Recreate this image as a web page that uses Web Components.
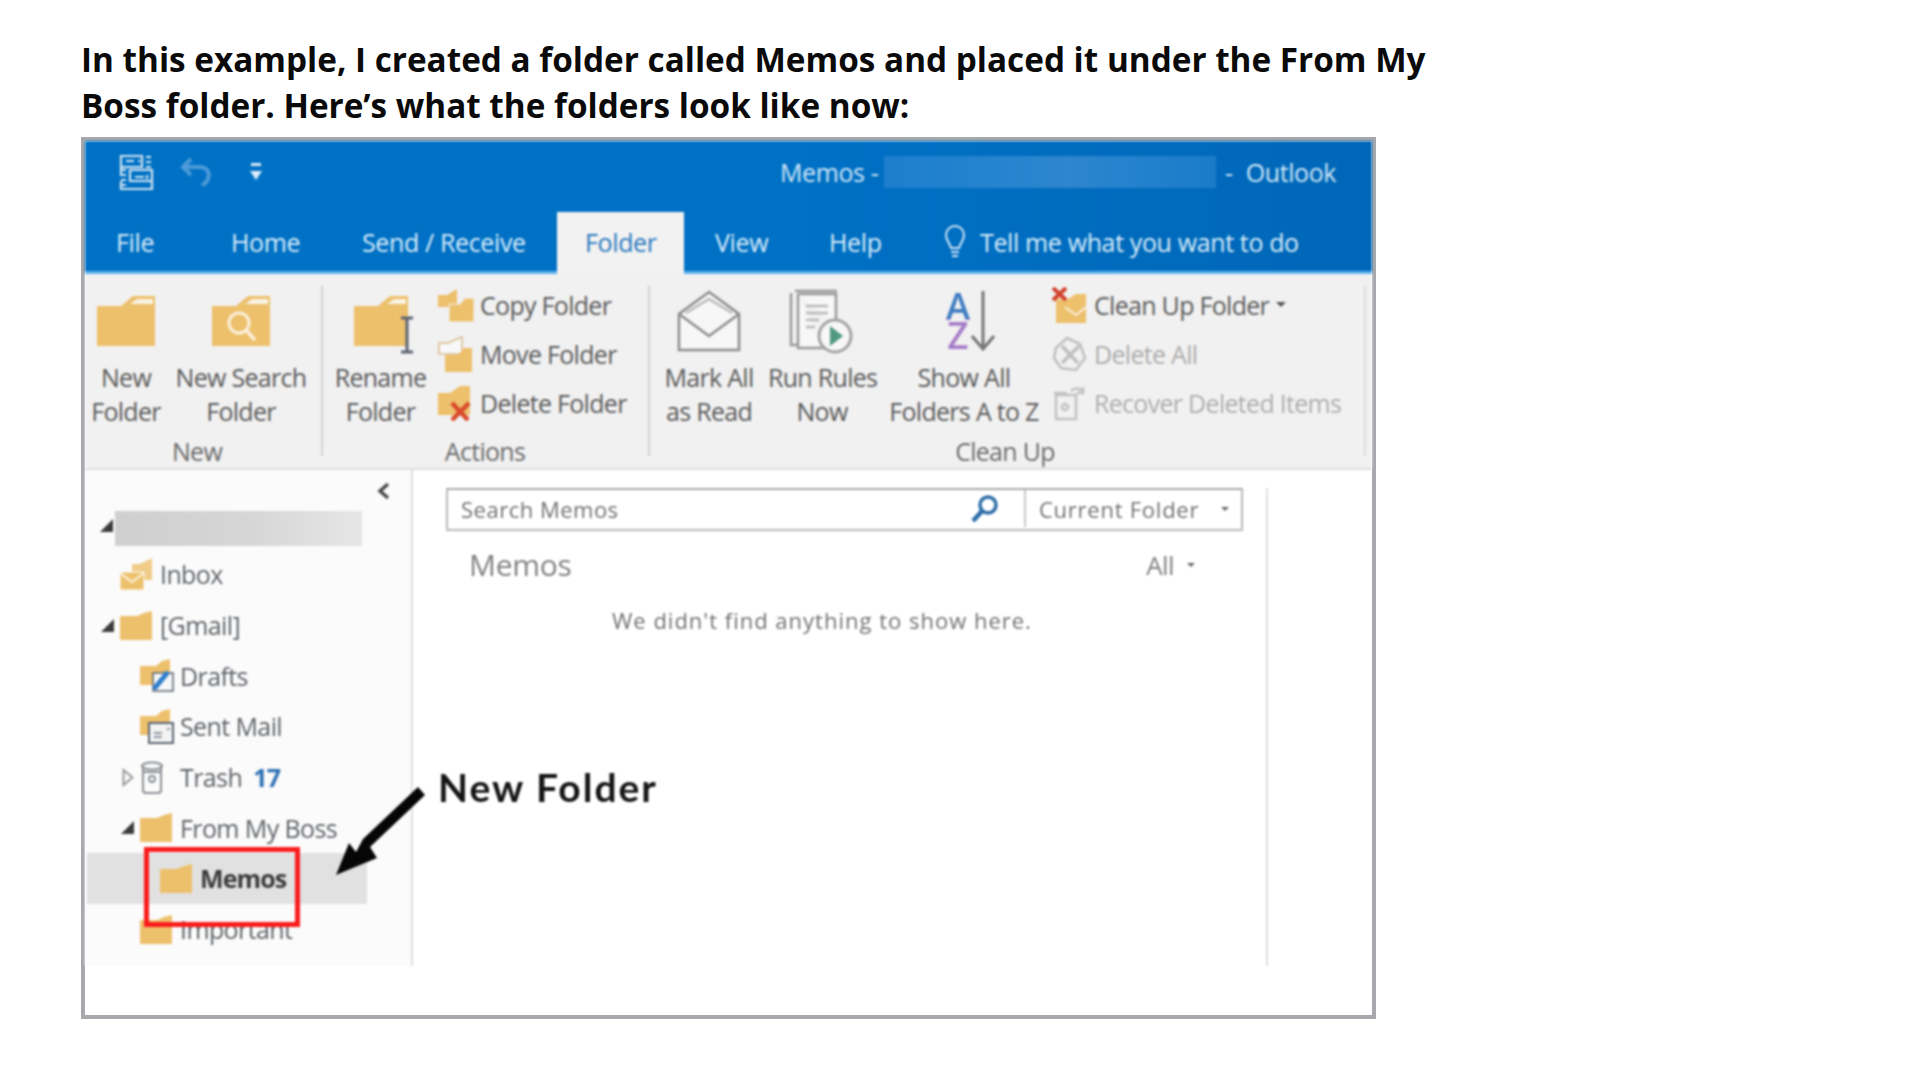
<!DOCTYPE html>
<html>
<head>
<meta charset="utf-8">
<title>Memos folder</title>
<style>
    html, body { margin: 0; background: #fff; }
    body { padding: 36px 0 0 81px; font-family: "Open Sans", "Noto Sans", sans-serif; }
</style>
</head>
<body>

<doc-heading>In this example, I created a folder called Memos and placed it under the From My<br>Boss folder. Here’s what the folders look like now:</doc-heading>

<ol-window>
    <ol-titlebar></ol-titlebar>
    <ol-tabs></ol-tabs>
    <ol-ribbon>
        <rb-group label="New" width="238" pad="14">
            <rb-big icon="folder" width="82">New<br>Folder</rb-big>
            <rb-big icon="searchfolder" width="148">New Search<br>Folder</rb-big>
        </rb-group>
        <rb-group label="Actions" width="327" pad="3">
            <rb-big icon="renamefolder" width="115">Rename<br>Folder</rb-big>
            <rb-column>
                <rb-small icon="copyfolder">Copy Folder</rb-small>
                <rb-small icon="movefolder">Move Folder</rb-small>
                <rb-small icon="deletefolder">Delete Folder</rb-small>
            </rb-column>
        </rb-group>
        <rb-group label="Clean Up" width="716" pad="6" last>
            <rb-big icon="markread" width="118">Mark All<br>as Read</rb-big>
            <rb-big icon="runrules" width="108">Run Rules<br>Now</rb-big>
            <rb-big icon="sortaz" width="176">Show All<br>Folders A to Z</rb-big>
            <rb-column>
                <rb-small icon="cleanup" arrow>Clean Up Folder</rb-small>
                <rb-small icon="deleteall" disabled>Delete All</rb-small>
                <rb-small icon="recover" disabled>Recover Deleted Items</rb-small>
            </rb-column>
        </rb-group>
    </ol-ribbon>
    <ol-body>
        <ol-nav slot="nav">
            <nav-row level="0" icon="inbox">Inbox</nav-row>
            <nav-row level="0" caret="open" icon="smallfolder">[Gmail]</nav-row>
            <nav-row level="1" icon="drafts">Drafts</nav-row>
            <nav-row level="1" icon="sent">Sent Mail</nav-row>
            <nav-row level="1" caret="closed" icon="trash" count="17">Trash</nav-row>
            <nav-row level="1" caret="open" icon="smallfolder">From My Boss</nav-row>
            <nav-row level="2" icon="smallfolder" selected>Memos</nav-row>
            <nav-row level="1" icon="smallfolder">Important</nav-row>
        </ol-nav>
        <ol-list slot="list"></ol-list>
    </ol-body>
    <ol-callout></ol-callout>
</ol-window>

<script>
    const FOLDER = '#edc06c';
    const ICONS = {
        folder: `<svg style="margin-top:6px" width="58" height="51" viewBox="0 0 58 51"><path fill="${FOLDER}" d="M0 11H24L36 1H58V51H0Z"/><path fill="#f9f3e4" d="M33 9L40 4H56V9Z"/></svg>`,
        searchfolder: `<svg style="margin-top:6px" width="58" height="51" viewBox="0 0 58 51"><path fill="${FOLDER}" d="M0 11H24L36 1H58V51H0Z"/><path fill="#f9f3e4" d="M33 9L40 4H56V9Z"/><circle cx="27" cy="28" r="10" fill="none" stroke="#fbf1dc" stroke-width="3"/><path d="M34 35L43 45" stroke="#fbf1dc" stroke-width="3.5"/></svg>`,
        renamefolder: `<svg style="margin:6px 0 0 6px" width="60" height="60" viewBox="0 0 60 60"><path fill="${FOLDER}" d="M0 11H24L36 1H54V51H0Z"/><path fill="#f9f3e4" d="M33 9L40 4H52V9Z"/><path d="M47 23H59M47 57H59M53 23V57" stroke="#5c6470" stroke-width="3" fill="none"/></svg>`,
        markread: `<svg width="66" height="64" viewBox="0 0 66 64"><g fill="none" stroke="#8d8d8d" stroke-width="2.5"><path d="M3 61V25L33 3L63 25V61Z" fill="#f7f7f7"/><path d="M3 25L33 47L63 25"/><path d="M10 24L33 10L56 24" stroke="#b9b9b9"/></g></svg>`,
        runrules: `<svg width="66" height="66" viewBox="0 0 66 66"><g fill="none" stroke="#9a9a9a" stroke-width="2.5"><path d="M2 4V56H8"/><path d="M6 2H48"/><path d="M9 5H47V36M36 59H9V5" fill="#f7f7f7"/><path d="M17 17H39M17 24H39M17 31H30M17 38H26" stroke="#b8b8b8"/></g><circle cx="46" cy="47" r="16" fill="#f7f7f7" stroke="#a3a3a3" stroke-width="3"/><path d="M41 37L54 47L41 57Z" fill="#4f9a80"/></svg>`,
        // one text node wrapped on two lines, tinted per line
        sortaz: `<div style="display:flex;gap:0;margin-left:12px;align-items:flex-start">
            <div style="width:26px;font:600 37px/29px 'Open Sans',sans-serif;letter-spacing:0;white-space:normal;word-break:break-all;text-align:center;color:#3f7dc2;background:linear-gradient(#3f7dc2 50%,#a67cc8 50%);-webkit-background-clip:text;background-clip:text;-webkit-text-fill-color:transparent;padding-top:2px">AZ</div>
            <svg width="24" height="62" viewBox="0 0 24 62"><path d="M12 2V59M1 47L12 60L23 47" fill="none" stroke="#767676" stroke-width="3"/></svg></div>`,
        copyfolder: `<svg width="36" height="34" viewBox="0 0 36 34"><path fill="${FOLDER}" d="M0 7H9L19 1V19H0Z"/><path fill="${FOLDER}" stroke="#f5f5f5" d="M11 16H22L27 10H36V34H11Z"/></svg>`,
        movefolder: `<svg width="36" height="36" viewBox="0 0 36 36"><path fill="#f8f8f8" stroke="#d6bd8c" stroke-width="1.5" d="M1 7H10L24 1V18H1Z"/><path fill="${FOLDER}" d="M7 19H20L26 12H34V36H7Z"/></svg>`,
        deletefolder: `<svg width="36" height="36" viewBox="0 0 36 36"><path fill="${FOLDER}" d="M0 8H12L22 1H32V30H0Z"/><path d="M14 18L30 35M31 18L14 35" stroke="#d9492a" stroke-width="4.5"/></svg>`,
        cleanup: `<svg width="36" height="36" viewBox="0 0 36 36"><path fill="${FOLDER}" d="M4 12H16L24 7H34V36H4Z"/><path d="M13 20L24 28L34 20" stroke="#f9efd9" stroke-width="2" fill="none"/><path d="M1 1L14 13M14 1L1 13" stroke="#d2402a" stroke-width="4"/></svg>`,
        deleteall: `<svg width="36" height="36" viewBox="0 0 36 36"><g fill="none" stroke="#bfbfbf" stroke-width="2.5"><path d="M4 12L15 2L28 8L33 22L24 34L9 32L2 22Z"/><path d="M10 10L26 27M27 10L10 27" stroke-width="3.5"/></g></svg>`,
        recover: `<svg width="34" height="36" viewBox="0 0 34 36"><g fill="none" stroke="#c2c2c2" stroke-width="2.5"><path d="M4 10H24V34H4Z"/><path d="M2 8H15"/><circle cx="13" cy="22" r="3"/><path d="M19 6C24 2 29 3 31 8M31 2V8H25"/></g></svg>`,
        inbox: `<svg width="34" height="32" viewBox="0 0 34 32"><path fill="${FOLDER}" opacity=".8" d="M12 6H20L32 0V22H12Z"/><path fill="${FOLDER}" stroke="#fff" d="M0 14H24V32H0Z"/><path d="M0 15L12 24L24 15" fill="none" stroke="#fbf2de" stroke-width="2"/></svg>`,
        smallfolder: `<svg width="33" height="29" viewBox="0 0 33 29"><path fill="${FOLDER}" d="M0 5H17L24 2L32 0V29H0Z"/></svg>`,
        drafts: `<svg width="34" height="33" viewBox="0 0 34 33"><path fill="${FOLDER}" d="M0 7H16L22 2L30 0V26H0Z"/><path fill="#f7f7f7" stroke="#5b6470" stroke-width="1.5" d="M13 14H33V32H13Z"/><path d="M14 30L28 13" stroke="#2f7ecb" stroke-width="5"/></svg>`,
        sent: `<svg width="34" height="35" viewBox="0 0 34 35"><path fill="${FOLDER}" d="M0 7H16L22 2L30 0V26H0Z"/><path fill="#f3f3f3" stroke="#5b6470" stroke-width="2" d="M9 14H33V34H9Z"/><path d="M14 24H22M14 28H22M27 20H30" stroke="#8f96a0" stroke-width="2"/></svg>`,
        trash: `<svg width="24" height="33" viewBox="0 0 24 33"><g fill="none" stroke="#8a8f95" stroke-width="2"><path d="M3 5V29Q3 32 6 32H18Q21 32 21 29V5"/><ellipse cx="12" cy="5" rx="10" ry="3.5"/><circle cx="12" cy="18" r="3"/><path d="M4 11H20"/></g></svg>`
    };

    class DocHeading extends HTMLElement {
        constructor() {
            super();
            this.root = this.attachShadow({ mode: 'open' });
            this.root.innerHTML = `
                <style>
                    :host { display: block; font: 700 33.3px/46px "Open Sans", sans-serif; color: #0a0a0a; margin-bottom: 9px; white-space: nowrap; }
                </style>
                <slot></slot>`;
        }
    }

    class OlIcon extends HTMLElement {
        constructor() {
            super();
            this.root = this.attachShadow({ mode: 'open' });
        }
        connectedCallback() {
            this.root.innerHTML = `
                <style>
                    :host { display: flex; align-items: center; justify-content: center; line-height: 0; }
                </style>
                ${ICONS[this.getAttribute('name')] || ''}`;
        }
    }

    class OlWindow extends HTMLElement {
        constructor() {
            super();
            this.root = this.attachShadow({ mode: 'open' });
            this.root.innerHTML = `
                <style>
                    :host { display: block; position: relative; box-sizing: border-box; width: 1295px; height: 882px; border: 4px solid #a6a8ac; background: #fff;
                            font-family: "Open Sans", "Noto Sans", sans-serif; }
                    #blur { filter: blur(.8px); }
                </style>
                <div id="blur"><slot></slot></div>`;
        }
    }

    class OlTitlebar extends HTMLElement {
        constructor() {
            super();
            this.root = this.attachShadow({ mode: 'open' });
            this.root.innerHTML = `
                <style>
                    :host { display: flex; align-items: center; box-sizing: border-box; height: 71px; padding-bottom: 9px; background: linear-gradient(90deg, #0071c5 55%, #0067b8); color: #cfe6f7; font-size: 25px; letter-spacing: -.4px; }
                    #qat { display: flex; align-items: center; width: 695px; padding-left: 33px; gap: 26px; box-sizing: border-box; }
                    #mask { width: 332px; height: 32px; margin: 0 9px 0 0; background: linear-gradient(90deg, #1c7fce, #2d86cf 55%, #1a7cca); }
                    span { white-space: nowrap; }
                    #app { margin-left: 13px; }
                    #who { width: 104px; }
                </style>
                <div id="qat">
                    <svg width="36" height="36" viewBox="0 0 36 36" fill="none" stroke="#cfe3f2" stroke-width="2.2"><path d="M3 2H24V13H3ZM8 7H16M20 7H22M28 3H33M28 8H33M28 13H33M3 13V22M3 27V35H34V16H12V27H34M3 16H8M3 21H8M3 26H8M3 31H8M17 23H26M29 21V25"/></svg>
                    <svg width="34" height="30" viewBox="0 0 34 30" fill="none" stroke="#4c9ad8" stroke-width="4"><path d="M11 2L3 10L11 18M3 10H20C28 10 30 17 28 22C27 25 24 27 22 28"/></svg>
                    <svg width="14" height="22" viewBox="0 0 14 22" style="margin-left:9px" fill="#d9ecfa"><path d="M2 2H12V5H2ZM1 10H13L7 19Z"/></svg>
                </div>
                <span id="who">Memos -</span>
                <div id="mask"></div>
                <span>-</span>
                <span id="app">Outlook</span>`;
        }
    }

    class OlTabs extends HTMLElement {
        constructor() {
            super();
            this.root = this.attachShadow({ mode: 'open' });
            this.root.innerHTML = `
                <style>
                    :host { display: grid; grid-template-columns: 115px 131px 226px 127px 114px 115px auto; height: 62px; box-sizing: border-box; background: linear-gradient(90deg, #0071c5 55%, #0067b8); border-bottom: 3px solid #5db1ee;
                            color: #d8ecfa; font-size: 25px; letter-spacing: -.37px; }
                    div { display: flex; align-items: center; padding-left: 31px; white-space: nowrap; }
                    .on { background: #f2f2f2; color: #2a78bf; margin-bottom: -3px; padding-left: 28px; padding-bottom: 3px; }
                    svg { margin-right: 14px; }
                </style>
                <div>File</div><div>Home</div><div>Send / Receive</div><div class="on">Folder</div><div>View</div><div>Help</div>
                <div><svg width="22" height="34" viewBox="0 0 22 34" fill="none" stroke="#cfe6f7" stroke-width="2"><path d="M7 23C6 18 2 16 2 10A9 9 0 0 1 20 10C20 16 16 18 15 23ZM7 27H15M8 31H14"/></svg>Tell me what you want to do</div>`;
        }
    }

    class OlRibbon extends HTMLElement {
        constructor() {
            super();
            this.root = this.attachShadow({ mode: 'open' });
            this.root.innerHTML = `
                <style>
                    :host { display: flex; height: 196px; box-sizing: border-box; background: #f1f1f1; border-bottom: 2px solid #dedede; color: #5a5a5a; font-size: 25px; letter-spacing: -.7px; }
                </style>
                <slot></slot>`;
        }
    }

    class RbGroup extends HTMLElement {
        constructor() {
            super();
            this.root = this.attachShadow({ mode: 'open' });
        }
        connectedCallback() {
            this.root.innerHTML = `
                <style>
                    :host { display: grid; grid-template-rows: 161px 33px; box-sizing: border-box; width: ${this.getAttribute('width')}px; }
                    :host(:not([last])) { background: linear-gradient(#d3d3d3, #d3d3d3) right 12px / 2px 170px no-repeat; }
                    :host([last]) { background: linear-gradient(#dcdcdc, #dcdcdc) right 12px / 2px 170px no-repeat; }
                    #items { display: flex; }
                    #label { text-align: center; line-height: 33px; color: #6a6a6a; padding-right: ${this.getAttribute('pad')}px; }
                </style>
                <div id="items"><slot></slot></div>
                <div id="label">${this.getAttribute('label')}</div>`;
        }
    }

    class RbBig extends HTMLElement {
        constructor() {
            super();
            this.root = this.attachShadow({ mode: 'open' });
        }
        connectedCallback() {
            this.root.innerHTML = `
                <style>
                    :host { display: block; box-sizing: border-box; width: ${this.getAttribute('width')}px; padding-top: 15px; text-align: center; line-height: 34px; white-space: nowrap; }
                    ol-icon { height: 71px; align-items: flex-start; }
                </style>
                <ol-icon name="${this.getAttribute('icon')}"></ol-icon>
                <slot></slot>`;
        }
    }

    class RbColumn extends HTMLElement {
        constructor() {
            super();
            this.root = this.attachShadow({ mode: 'open' });
            this.root.innerHTML = `
                <style>
                    :host { display: flex; flex-direction: column; padding-top: 6px; }
                </style>
                <slot></slot>`;
        }
    }

    class RbSmall extends HTMLElement {
        constructor() {
            super();
            this.root = this.attachShadow({ mode: 'open' });
        }
        connectedCallback() {
            const arrow = this.hasAttribute('arrow') ? '<i></i>' : '';
            this.root.innerHTML = `
                <style>
                    :host { display: flex; align-items: center; height: 49px; white-space: nowrap; }
                    :host([disabled]) { color: #adadad; }
                    ol-icon { width: 42px; justify-content: flex-start; }
                    i { width: 0; height: 0; margin-left: 7px; border: 5px solid transparent; border-top-color: #555; border-bottom: 0; }
                </style>
                <ol-icon name="${this.getAttribute('icon')}"></ol-icon>
                <slot></slot>${arrow}`;
        }
    }

    class OlBody extends HTMLElement {
        constructor() {
            super();
            this.root = this.attachShadow({ mode: 'open' });
            this.root.innerHTML = `
                <style>
                    :host { display: flex; height: 496px; }
                </style>
                <slot name="nav"></slot>
                <slot name="list"></slot>`;
        }
    }

    class OlNav extends HTMLElement {
        constructor() {
            super();
            this.root = this.attachShadow({ mode: 'open' });
            this.root.innerHTML = `
                <style>
                    :host { display: block; box-sizing: border-box; width: 328px; height: 496px; overflow: hidden; background: #fbfbfb; border-right: 2px solid #dfdfdf; color: #5f6368; font-size: 25px; letter-spacing: -.6px; }
                    #chev { display: flex; justify-content: flex-end; height: 37px; padding: 12px 21px 0 0; box-sizing: border-box; }
                    #account { display: flex; align-items: center; height: 42px; }
                    #account b { width: 0; height: 0; margin: -6px 2px 0 15px; border-left: 13px solid transparent; border-bottom: 13px solid #3b3b3b; }
                    #account span { width: 247px; height: 35px; background: linear-gradient(90deg, #cfcfcf, #d6d6d6 55%, #e6e6e6); }
                    #list { width: 282px; }
                </style>
                <div id="chev"><svg width="13" height="18" viewBox="0 0 13 18" fill="none" stroke="#4a4a4a" stroke-width="3.5"><path d="M11 2L3 9L11 16"/></svg></div>
                <div id="account"><b></b><span></span></div>
                <div id="list"><slot></slot></div>`;
        }
    }

    class NavRow extends HTMLElement {
        constructor() {
            super();
            this.root = this.attachShadow({ mode: 'open' });
        }
        connectedCallback() {
            const level = parseInt(this.getAttribute('level'));
            const caret = this.getAttribute('caret');
            const count = this.getAttribute('count');
            const mark = caret === 'closed'
                ? '<svg width="12" height="19" viewBox="0 0 12 19"><path d="M1.5 2L10.5 9.5L1.5 17Z" fill="none" stroke="#9a9a9a" stroke-width="2"/></svg>'
                : caret === 'open' ? '<i></i>' : '';
            this.root.innerHTML = `
                <style>
                    :host { display: flex; align-items: center; height: 50.7px; white-space: nowrap; padding-left: ${level * 20}px; margin-left: 2px; }
                    :host([selected]) { background: #e1e1e1; font-weight: 700; color: #3c3c3c; letter-spacing: -.9px; }
                    #caret { width: 33px; display: flex; justify-content: flex-end; padding-right: 6px; box-sizing: border-box; }
                    i { width: 0; height: 0; border-left: 13px solid transparent; border-bottom: 13px solid #3b3b3b; }
                    ol-icon { width: 34px; margin-right: 6px; justify-content: flex-start; }
                    #count { margin-left: 11px; color: #2f71b5; font-weight: 700; }
                </style>
                <div id="caret">${mark}</div>
                <ol-icon name="${this.getAttribute('icon')}"></ol-icon>
                <slot></slot>${count ? `<span id="count">${count}</span>` : ''}`;
        }
    }

    class OlList extends HTMLElement {
        constructor() {
            super();
            this.root = this.attachShadow({ mode: 'open' });
            this.root.innerHTML = `
                <style>
                    :host { display: block; box-sizing: border-box; width: 855px; height: 478px; margin-top: 18px; padding-left: 33px; border-right: 2px solid #dfdfdf; color: #6d6d6d; }
                    #search { display: flex; align-items: center; width: 797px; height: 43px; box-sizing: border-box; padding-bottom: 2px; border: 2px solid #b9b9b9; border-top-color: #a9a9a9; font-size: 22px; letter-spacing: .5px; color: #707070; }
                    #query { display: flex; align-items: center; justify-content: space-between; box-sizing: border-box; width: 578px; height: 100%; padding: 0 24px 0 13px; border-right: 2px solid #c8c8c8; }
                    #scope { display: flex; align-items: center; justify-content: space-between; flex: 1; padding: 0 12px 0 13px; white-space: nowrap; letter-spacing: .75px; }
                    i { width: 0; height: 0; border: 4.5px solid transparent; border-top-color: #666; border-bottom: 0; }
                    #head { display: flex; align-items: center; justify-content: space-between; box-sizing: border-box; width: 749px; height: 67px; padding-left: 23px; font-size: 30px; letter-spacing: -.3px; color: #808080; }
                    #all { display: flex; align-items: center; gap: 13px; font-size: 26px; letter-spacing: -.6px; }
                    #empty { height: 52px; line-height: 45px; padding-left: 166px; font-size: 22px; letter-spacing: 1px; color: #717171; white-space: nowrap; }
                </style>
                <div id="search">
                    <div id="query"><span>Search Memos</span>
                        <svg width="30" height="30" viewBox="0 0 30 30" fill="none" stroke="#2d6da8" stroke-width="3.5"><circle cx="18" cy="11" r="8"/><path d="M12 17L3 27" stroke-width="4.5"/></svg></div>
                    <div id="scope"><span>Current Folder</span><i></i></div>
                </div>
                <div id="head"><span>Memos</span><div id="all"><span>All</span><i></i></div></div>
                <div id="empty">We didn't find anything to show here.</div>`;
        }
    }

    class OlCallout extends HTMLElement {
        constructor() {
            super();
            this.root = this.attachShadow({ mode: 'open' });
            this.root.innerHTML = `
                <style>
                    :host { display: block; }
                    #box { position: absolute; left: 59px; top: 706px; width: 156px; height: 80px; box-sizing: border-box; border: 5px solid #fa1c1c; }
                    #label { position: absolute; left: 353px; top: 621px; font: 700 39px/50px Lato, sans-serif; color: #141414; letter-spacing: 2px; white-space: nowrap; filter: blur(.5px); }
                    svg { position: absolute; left: 240px; top: 640px; filter: blur(.4px); }
                </style>
                <div id="box"></div>
                <div id="label">New Folder</div>
                <svg width="110" height="100" viewBox="0 0 110 100"><path fill="#060606" d="M93 6L100 14L45 66L52 77L11 94L24 62L31 71L38 58Z"/></svg>`;
        }
    }

    customElements.define('doc-heading', DocHeading);
    customElements.define('ol-icon', OlIcon);
    customElements.define('ol-window', OlWindow);
    customElements.define('ol-titlebar', OlTitlebar);
    customElements.define('ol-tabs', OlTabs);
    customElements.define('ol-ribbon', OlRibbon);
    customElements.define('rb-group', RbGroup);
    customElements.define('rb-big', RbBig);
    customElements.define('rb-column', RbColumn);
    customElements.define('rb-small', RbSmall);
    customElements.define('ol-body', OlBody);
    customElements.define('ol-nav', OlNav);
    customElements.define('nav-row', NavRow);
    customElements.define('ol-list', OlList);
    customElements.define('ol-callout', OlCallout);
</script>
</body>
</html>
